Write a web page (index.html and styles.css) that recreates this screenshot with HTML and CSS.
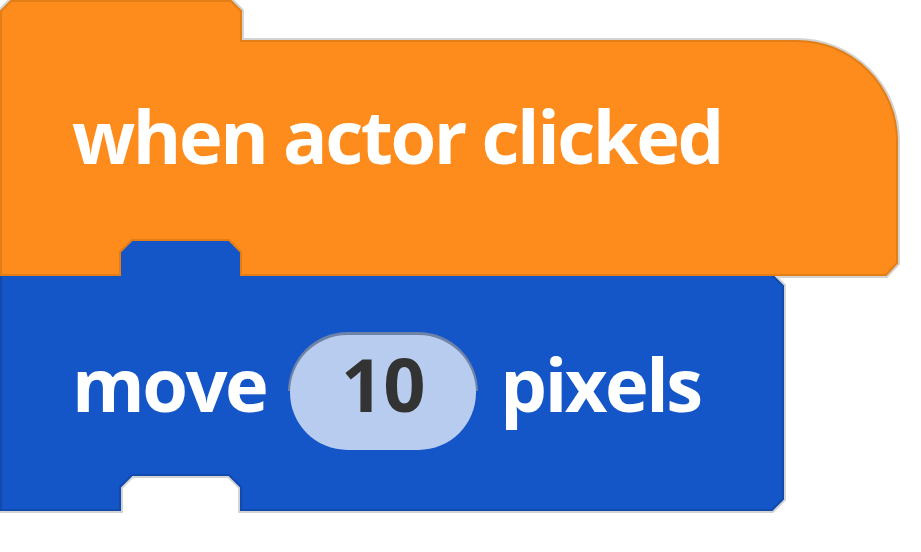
FILE: index.html
```html
<!DOCTYPE html>
<html lang="en">
<head>
    <meta charset="UTF-8">
    <meta name="viewport" content="width=device-width, initial-scale=1.0">
    <title>Blocks</title>
    <link rel="stylesheet" href="styles.css">
</head>
<body>
    <div class="script">
        <svg class="shapes" width="902" height="516" viewBox="0 0 902 516">
            <defs>
                <path id="hat-shape" d="M1 11 L11 1 L231 1 L241 11 L241 41 L797 41 A100 100 0 0 1 897 141 L897 263 L886 275 L241 275 L241 252 L229 240 L132 240 L120 252 L120 275 L1 275 Z"/>
                <path id="move-shape" d="M1 275 L120 275 L120 252 L132 240 L229 240 L241 252 L241 275 L772 275 L783 286 L783 499 L772 510 L241 510 L241 487 L229 475 L132 475 L120 487 L120 510 L1 510 Z"/>
            </defs>
            <g class="outline">
                <use href="#hat-shape"/>
                <use href="#move-shape"/>
            </g>
            <use class="move-block" href="#move-shape"/>
            <use class="hat-block" href="#hat-shape"/>
        </svg>

        <div class="row hat-row">
            <span class="label">when actor clicked</span>
        </div>
        <div class="row move-row">
            <span class="label">move</span>
            <span class="field"><span class="field-value">10</span></span>
            <span class="label">pixels</span>
        </div>
    </div>
</body>
</html>
```

FILE: styles.css
```css
body {
    margin: 0;
    background-color: #ffffff;
    font-family: "Open Sans", Arial, sans-serif;
}
.script {
    position: relative;
    width: 902px;
    height: 516px;
    display: flex;
    flex-direction: column;
}
.shapes {
    position: absolute;
    left: 0;
    top: 0;
}
.outline use {
    fill: none;
    stroke: #d3d3d3;
    stroke-width: 6;
}
.hat-block {
    fill: #fe8c1c;
    stroke: #e37e17;
    stroke-width: 2;
}
.move-block {
    fill: #1456c8;
    stroke: #114aad;
    stroke-width: 2;
}
.row {
    position: relative;
    display: flex;
    box-sizing: border-box;
    padding-left: 72px;
    gap: 22px;
    font-size: 74px;
    font-weight: 700;
    line-height: 80px;
    color: #ffffff;
}
.hat-row {
    height: 275px;
    padding-top: 96px;
}
.move-row {
    height: 235px;
    padding-top: 57px;
    align-items: baseline;
}
.label {
    letter-spacing: -2.5px;
}
.field {
    display: inline-block;
    padding: 3px 2px 0;
    border-radius: 60px 60px 0 0;
    background: linear-gradient(#6f82a8 50%, transparent 50%);
}
.field-value {
    display: block;
    box-sizing: border-box;
    width: 186px;
    height: 115px;
    padding-top: 9px;
    border-radius: 58px;
    background-color: #b7ccee;
    color: #333333;
    text-align: center;
}
```
